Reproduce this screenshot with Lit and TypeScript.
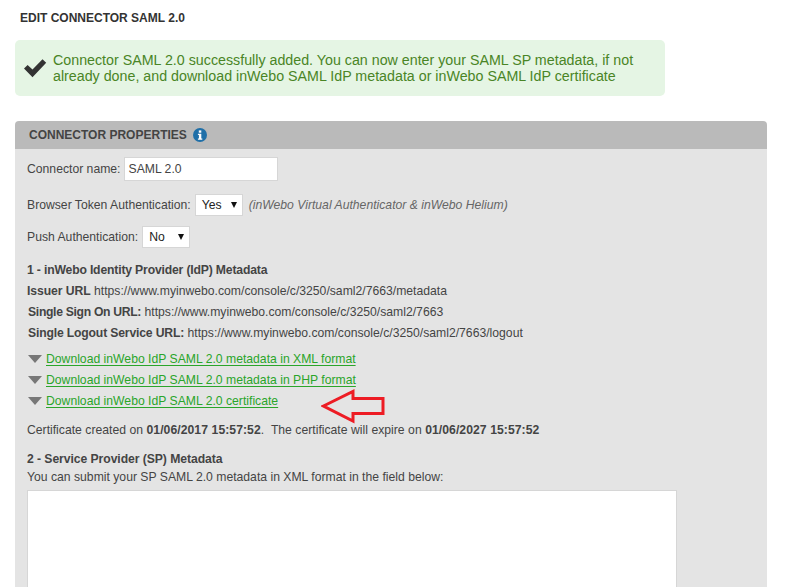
import { LitElement, html, css } from "lit";
import { customElement } from "lit/decorators.js";

@customElement("app-root")
export class AppRoot extends LitElement {
  static styles = css`
    :host { display: block; height: 587px; overflow: hidden; background: #fff; font-family: "Liberation Sans", Arial, sans-serif; font-size: 12.2px; color: #444; }
    .page { padding: 11px 21px 0 15px; display: flex; flex-direction: column; }
    h1 { margin: 0 0 0 5px; font-size: 12px; line-height: 14px; font-weight: bold; color: #333; }
    .alert { margin-top: 15px; width: 650px; height: 56px; box-sizing: border-box; background: #e5f5e4; border-radius: 5px; display: flex; align-items: center; padding-left: 8px; gap: 6px; color: #4a8526; font-size: 14.26px; line-height: 16px; }
    .alert svg { flex: none; }
    .panel-head { margin-top: 25px; height: 28px; background: #bababa; border-radius: 4px 4px 0 0; display: flex; align-items: center; gap: 6px; padding-left: 14px; font-weight: bold; color: #444; font-size: 12px; }
    .panel { background: #e4e4e4; padding: 8px 12px 0; height: 500px; }
    .row { display: flex; align-items: center; }
    .row2 { margin-top: 13px; }
    .row3 { margin-top: 10px; }
    .tb { box-sizing: border-box; width: 154px; height: 24px; border: 1px solid #d6d6d6; background: #fff; padding-left: 4px; margin-left: 3px; line-height: 22px; color: #444; }
    .sel { box-sizing: border-box; width: 48px; height: 22px; border: 1px solid #d6d6d6; background: #fff; margin-left: 4px; padding: 0 5px 0 6px; display: flex; align-items: center; justify-content: space-between; color: #222; }
    .sel i { width: 0; height: 0; border-left: 3.5px solid transparent; border-right: 3.5px solid transparent; border-top: 6px solid #111; }
    .note { font-style: italic; color: #666; margin-left: 6px; }
    b { color: #444; }
    .s1 { letter-spacing: -0.32px; }
    .s2 { letter-spacing: -0.17px; }
    .s3 { letter-spacing: -0.07px; }
    .d1 { letter-spacing: 0.05px; }
    .line { line-height: 21px; height: 21px; }
    .indent { padding-left: 1px; }
    .idp { margin-top: 12px; }
    .dls { margin-top: 4px; }
    .dl { display: flex; align-items: center; height: 21px; gap: 4px; }
    .dl i { width: 0; height: 0; margin-left: 1px; border-left: 7px solid transparent; border-right: 7px solid transparent; border-top: 8px solid #777; }
    a { color: #2aa52a; text-decoration: underline; text-underline-offset: 2px; }
    .cert { margin-top: 9px; word-spacing: 0.1px; }
    .sp { margin-top: 8px; }
    .hint { line-height: 15px; height: 15px; }
    .area { box-sizing: border-box; width: 650px; height: 300px; background: #fff; border: 1px solid #d6d6d6; margin-top: 5px; }
    .arrow { position: absolute; left: 321px; top: 389px; }
  `;
  render() {
    return html`<div class="page">
      <h1>EDIT CONNECTOR SAML 2.0</h1>
      <div class="alert">
        <svg width="24" height="20" viewBox="0 0 24 20"><path d="M1 10.5 L4.6 7 L9.5 11.6 L19.5 1.2 L23.2 4.8 L9.5 19.2 Z" fill="#333"/></svg>
        <div>Connector SAML 2.0 successfully added. You can now enter your SAML SP metadata, if not<br>already done, and download inWebo SAML IdP metadata or inWebo SAML IdP certificate</div>
      </div>
      <div class="panel-head">CONNECTOR PROPERTIES
        <svg width="14" height="14" viewBox="0 0 14 14"><circle cx="7" cy="7" r="7" fill="#1f6fa8"/><rect x="5.8" y="2.4" width="2.5" height="2.3" fill="#fff"/><path d="M4.9 5.7H8.3V10.6H9.3V11.8H4.9V10.6H5.9V6.9H4.9Z" fill="#fff"/></svg>
      </div>
      <div class="panel">
        <div class="row">Connector name:<span class="tb">SAML 2.0</span></div>
        <div class="row row2">Browser Token Authentication:<span class="sel">Yes<i></i></span><span class="note">(inWebo Virtual Authenticator &amp; inWebo Helium)</span></div>
        <div class="row row3">Push Authentication:<span class="sel">No<i></i></span></div>
        <div class="line idp"><b class="s2">1 - inWebo Identity Provider (IdP) Metadata</b></div>
        <div class="line"><b class="s3">Issuer URL</b> https://www.myinwebo.com/console/c/3250/saml2/7663/metadata</div>
        <div class="line indent"><b class="s1">Single Sign On URL:</b> https://www.myinwebo.com/console/c/3250/saml2/7663</div>
        <div class="line indent"><b class="s2">Single Logout Service URL:</b> https://www.myinwebo.com/console/c/3250/saml2/7663/logout</div>
        <div class="dls">
          <div class="dl"><i></i><a>Download inWebo IdP SAML 2.0 metadata in XML format</a></div>
          <div class="dl"><i></i><a>Download inWebo IdP SAML 2.0 metadata in PHP format</a></div>
          <div class="dl"><i></i><a>Download inWebo IdP SAML 2.0 certificate</a></div>
        </div>
        <div class="line cert">Certificate created on <b class="d1">01/06/2017 15:57:52</b>.&nbsp; The certificate will expire on <b class="d1">01/06/2027 15:57:52</b></div>
        <div class="line sp"><b class="s3">2 - Service Provider (SP) Metadata</b></div>
        <div class="hint">You can submit your SP SAML 2.0 metadata in XML format in the field below:</div>
        <div class="area"></div>
      </div>
      <svg class="arrow" width="66" height="36" viewBox="0 0 66 36"><path d="M2.5 17 L32 2.5 V9.5 L62 9.5 V24.5 L32 24.5 V32 Z" fill="none" stroke="#ed1c24" stroke-width="3"/></svg>
    </div>`;
  }
}
